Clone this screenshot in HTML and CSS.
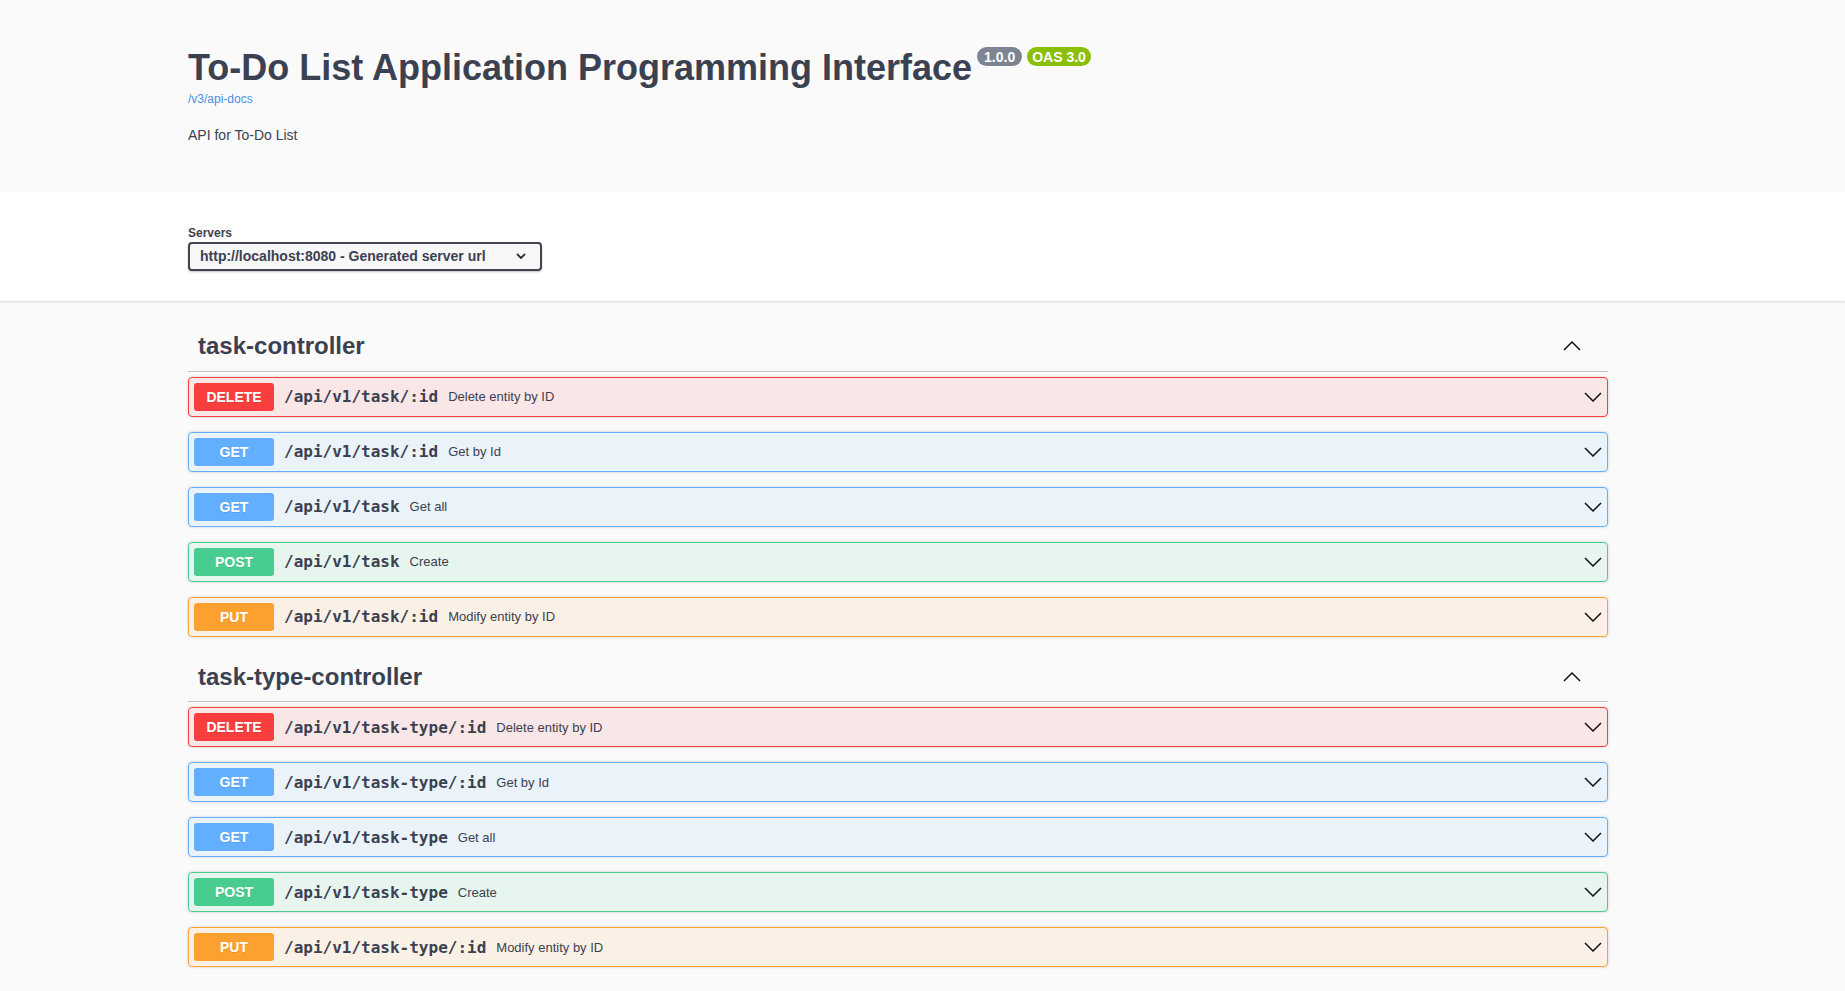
FILE: index.html
```html
<!DOCTYPE html>
<html lang="en">
<head>
<meta charset="utf-8">
<title>Swagger UI</title>
<link rel="stylesheet" href="styles.css">
</head>
<body>
<div class="info-band">
  <div class="wrapper info">
    <h2 class="title"><span class="title-text">To-Do List Application Programming Interface</span><span class="badge version">1.0.0</span><span class="badge oas">OAS 3.0</span></h2>
    <a class="url" href="#">/v3/api-docs</a>
    <p class="desc">API for To-Do List</p>
  </div>
</div>

<div class="scheme">
  <div class="wrapper">
    <div class="servers">
      <span class="servers-title">Servers</span>
      <div class="select">
        <span class="select-text">http://localhost:8080 - Generated server url</span>
        <svg class="select-arrow" width="10" height="6" viewBox="0 0 10 6"><polyline points="1,1 5,5 9,1" fill="none" stroke="#2b2d33" stroke-width="1.8"/></svg>
      </div>
    </div>
  </div>
</div>

<div class="wrapper tags">
  <section class="tag-section">
    <h3 class="tag"><span>task-controller</span><span class="toggle"><svg width="18" height="10" viewBox="0 0 18 10"><polyline points="1,9 9,1 17,9" fill="none" stroke="#111" stroke-width="1.5"/></svg></span></h3>
    <div class="opblock delete"><span class="method">DELETE</span><span class="path">/api/v1/task/:id</span><span class="summary">Delete entity by ID</span><svg class="arrow" width="18" height="10" viewBox="0 0 18 10"><polyline points="1,1 9,9 17,1" fill="none" stroke="#111" stroke-width="1.5"/></svg></div>
    <div class="opblock get"><span class="method">GET</span><span class="path">/api/v1/task/:id</span><span class="summary">Get by Id</span><svg class="arrow" width="18" height="10" viewBox="0 0 18 10"><polyline points="1,1 9,9 17,1" fill="none" stroke="#111" stroke-width="1.5"/></svg></div>
    <div class="opblock get"><span class="method">GET</span><span class="path">/api/v1/task</span><span class="summary">Get all</span><svg class="arrow" width="18" height="10" viewBox="0 0 18 10"><polyline points="1,1 9,9 17,1" fill="none" stroke="#111" stroke-width="1.5"/></svg></div>
    <div class="opblock post"><span class="method">POST</span><span class="path">/api/v1/task</span><span class="summary">Create</span><svg class="arrow" width="18" height="10" viewBox="0 0 18 10"><polyline points="1,1 9,9 17,1" fill="none" stroke="#111" stroke-width="1.5"/></svg></div>
    <div class="opblock put"><span class="method">PUT</span><span class="path">/api/v1/task/:id</span><span class="summary">Modify entity by ID</span><svg class="arrow" width="18" height="10" viewBox="0 0 18 10"><polyline points="1,1 9,9 17,1" fill="none" stroke="#111" stroke-width="1.5"/></svg></div>
  </section>

  <section class="tag-section">
    <h3 class="tag"><span>task-type-controller</span><span class="toggle"><svg width="18" height="10" viewBox="0 0 18 10"><polyline points="1,9 9,1 17,9" fill="none" stroke="#111" stroke-width="1.5"/></svg></span></h3>
    <div class="opblock delete"><span class="method">DELETE</span><span class="path">/api/v1/task-type/:id</span><span class="summary">Delete entity by ID</span><svg class="arrow" width="18" height="10" viewBox="0 0 18 10"><polyline points="1,1 9,9 17,1" fill="none" stroke="#111" stroke-width="1.5"/></svg></div>
    <div class="opblock get"><span class="method">GET</span><span class="path">/api/v1/task-type/:id</span><span class="summary">Get by Id</span><svg class="arrow" width="18" height="10" viewBox="0 0 18 10"><polyline points="1,1 9,9 17,1" fill="none" stroke="#111" stroke-width="1.5"/></svg></div>
    <div class="opblock get"><span class="method">GET</span><span class="path">/api/v1/task-type</span><span class="summary">Get all</span><svg class="arrow" width="18" height="10" viewBox="0 0 18 10"><polyline points="1,1 9,9 17,1" fill="none" stroke="#111" stroke-width="1.5"/></svg></div>
    <div class="opblock post"><span class="method">POST</span><span class="path">/api/v1/task-type</span><span class="summary">Create</span><svg class="arrow" width="18" height="10" viewBox="0 0 18 10"><polyline points="1,1 9,9 17,1" fill="none" stroke="#111" stroke-width="1.5"/></svg></div>
    <div class="opblock put"><span class="method">PUT</span><span class="path">/api/v1/task-type/:id</span><span class="summary">Modify entity by ID</span><svg class="arrow" width="18" height="10" viewBox="0 0 18 10"><polyline points="1,1 9,9 17,1" fill="none" stroke="#111" stroke-width="1.5"/></svg></div>
  </section>
</div>
</body>
</html>
```

FILE: styles.css
```css
* { box-sizing: border-box; }

html, body {
  margin: 0;
  padding: 0;
  background: #fafafa;
  font-family: "Liberation Sans", Arial, sans-serif;
  color: #3b4151;
}

.wrapper {
  width: 1460px;
  padding: 0 20px;
  margin-left: 168px;
}

/* info */
.info {
  padding-top: 47px;
  padding-bottom: 49px;
}

.title {
  margin: 0;
  display: flex;
  align-items: flex-start;
  font-size: 36px;
  font-weight: 700;
  line-height: 1.15;
  color: #3b4151;
}

.badge {
  margin: 0 0 0 5px;
  padding: 1.5px 7px;
  border-radius: 57px;
  font-size: 14px;
  font-weight: 700;
  line-height: normal;
  color: #fff;
}

.badge.version { background: #7d8492; }
.badge.oas { background: #89bf04; padding: 1.5px 5px; }

.url {
  display: block;
  margin-top: 4px;
  font-size: 12px;
  line-height: normal;
  color: #4990e2;
  text-decoration: none;
}

.desc {
  margin: 21px 0 0;
  font-size: 14px;
  line-height: normal;
  color: #3b4151;
}

/* scheme */
.scheme {
  background: #fff;
  box-shadow: 0 1px 2px 0 rgba(0, 0, 0, 0.15);
  padding: 34px 0 30px;
  margin-bottom: 21px;
}

.servers {
  display: flex;
  flex-direction: column;
  align-items: flex-start;
}

.servers-title {
  font-size: 12px;
  font-weight: 700;
  line-height: normal;
  color: #3b4151;
}

.select {
  margin-top: 1.5px;
  width: 354px;
  height: 29px;
  display: flex;
  align-items: center;
  justify-content: space-between;
  padding: 0 14px 0 10px;
  border: 2px solid #41444e;
  border-radius: 4px;
  background: #f7f7f7;
  box-shadow: 0 1px 2px 0 rgba(0, 0, 0, 0.25);
  font-size: 14px;
  font-weight: 700;
  line-height: normal;
  color: #3b4151;
}

.select-arrow { display: block; }

/* tags */
.tag-section {
  display: flex;
  flex-direction: column;
}

.tag-section + .tag-section { margin-top: 0.5px; }

.tag {
  margin: 0 0 5px;
  padding: 10px 20px 10px 10px;
  display: flex;
  align-items: center;
  justify-content: space-between;
  border-bottom: 1px solid rgba(59, 65, 81, 0.3);
  font-size: 24px;
  font-weight: 700;
  line-height: normal;
  color: #3b4151;
}

.toggle {
  width: 32px;
  height: 29px;
  display: flex;
  align-items: center;
  justify-content: center;
}

.toggle svg { display: block; }

.opblock {
  display: flex;
  align-items: center;
  padding: 5px;
  margin: 0 0 15px;
  border: 1px solid #000;
  border-radius: 4px;
  box-shadow: 0 0 3px rgba(0, 0, 0, 0.19);
}

.method {
  min-width: 80px;
  padding: 6px 0;
  border-radius: 3px;
  font-size: 14px;
  font-weight: 700;
  line-height: normal;
  text-align: center;
  color: #fff;
  text-shadow: 0 1px 0 rgba(0, 0, 0, 0.1);
}

.path {
  padding: 0 10px;
  font-family: "DejaVu Sans Mono", monospace;
  font-size: 16px;
  font-weight: 700;
  color: #3b4151;
}

.summary {
  flex: 1;
  font-size: 13px;
  color: #3b4151;
}

.arrow { display: block; flex: none; }

.opblock.delete { background: rgba(249, 62, 62, 0.1); border-color: #f93e3e; }
.opblock.delete .method { background: #f93e3e; }
.opblock.get { background: rgba(97, 175, 254, 0.1); border-color: #61affe; }
.opblock.get .method { background: #61affe; }
.opblock.post { background: rgba(73, 204, 144, 0.1); border-color: #49cc90; }
.opblock.post .method { background: #49cc90; }
.opblock.put { background: rgba(252, 161, 48, 0.1); border-color: #fca130; }
.opblock.put .method { background: #fca130; }
```
